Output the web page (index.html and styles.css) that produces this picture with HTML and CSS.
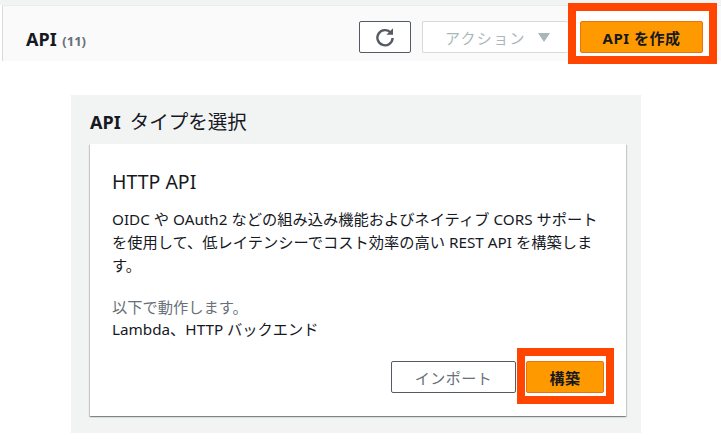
FILE: index.html
```html
<!DOCTYPE html>
<html lang="ja">
<head>
  <meta charset="UTF-8" />
  <title>API</title>
  <link rel="stylesheet" href="styles.css">
</head>
<body>
  <div class="top-strip"></div>
  <header class="list-header">
    <h1>API <span class="count">(11)</span></h1>
    <div class="header-actions">
      <button class="btn refresh" aria-label="refresh">
        <svg width="20" height="20" viewBox="0 0 20 20" fill="none" stroke="#545b64" stroke-width="2.4">
          <path d="M15.8 5.8A7.6 7.6 0 1 0 17.6 11"/>
          <path d="M18 1.2v6.6h-6.6z" fill="#545b64" stroke="none"/>
        </svg>
      </button>
      <button class="btn disabled">アクション<span class="caret"></span></button>
      <div class="callout callout-top">
        <button class="btn primary create">API を作成</button>
      </div>
    </div>
  </header>

  <section class="type-panel">
    <h2><b>API</b> タイプを選択</h2>
    <div class="card">
      <h3>HTTP API</h3>
      <p class="desc">OIDC や OAuth2 などの組み込み機能およびネイティブ CORS サポートを使用して、低レイテンシーでコスト効率の高い REST API を構築します。</p>
      <p class="works-label">以下で動作します。</p>
      <p class="works-value">Lambda、HTTP バックエンド</p>
      <div class="card-actions">
        <button class="btn import">インポート</button>
        <div class="callout callout-build">
          <button class="btn primary build">構築</button>
        </div>
      </div>
    </div>
  </section>
</body>
</html>
```

FILE: styles.css
```css
* {
  box-sizing: border-box;
}
body {
  margin: 0;
  height: 439px;
  overflow: hidden;
  background: #fff;
  color: #16191f;
  font-family: "Noto Sans", "Noto Sans CJK JP", sans-serif;
  font-size: 15.25px;
}
.top-strip {
  height: 5px;
  background: #f2f3f3;
}
.list-header {
  display: flex;
  justify-content: space-between;
  height: 56px;
  margin-left: 2px;
  padding-left: 23px;
  background: #fafafa;
  border-left: 1px solid #d5dbdb;
  border-top: 1px solid #eaeded;
}
h1 {
  margin: 21px 0 0;
  font-size: 18px;
  line-height: 24px;
  font-weight: 700;
}
.count {
  font-size: 13px;
  margin-left: 1px;
  color: #687078;
}
.header-actions {
  display: flex;
  align-items: flex-start;
  padding-right: 4px;
}
.btn {
  height: 32px;
  border-radius: 2px;
  font-family: inherit;
  font-size: 15px;
  font-weight: 700;
  letter-spacing: 0.5px;
  background: #fff;
  border: 1px solid #545b64;
  color: #545b64;
  padding: 0;
}
.refresh {
  display: flex;
  align-items: center;
  justify-content: center;
  width: 52px;
  margin-top: 15px;
  margin-right: 11px;
}
.disabled {
  display: flex;
  align-items: center;
  gap: 12px;
  width: 146px;
  margin-top: 15px;
  border-color: #d5dbdb;
  border-right: 0;
  color: #aab7b8;
  padding-left: 22px;
  letter-spacing: 1.3px;
  font-weight: 400;
}
.caret {
  width: 0;
  height: 0;
  border-left: 6px solid transparent;
  border-right: 6px solid transparent;
  border-top: 9px solid #aab7b8;
}
.primary {
  background: #ff9900;
  border-color: #ec7211;
  color: #16191f;
}
.callout {
  border: 8px solid #ff4500;
  background: #fff;
}
.callout-top {
  margin-top: -3px;
  padding: 10px 6px 3px 4px;
}
.create {
  display: block;
  width: 123px;
}
.type-panel {
  width: 570px;
  height: 338px;
  margin: 34px 0 0 71px;
  padding: 0 15px 17px 19px;
  background: #f2f3f3;
}
h2 {
  margin: 0;
  padding-top: 13px;
  height: 49px;
  font-size: 19.5px;
  line-height: 28px;
  font-weight: 400;
}
h2 b {
  font-size: 18px;
  font-weight: 700;
  margin-right: 4px;
}
.card {
  display: flex;
  flex-direction: column;
  height: 272px;
  padding: 24px 24px 12px 22px;
  background: #fff;
  box-shadow: 0 1px 1px 0 rgba(0, 28, 36, 0.3), 1px 1px 1px 0 rgba(0, 28, 36, 0.15), -1px 1px 1px 0 rgba(0, 28, 36, 0.15);
}
h3 {
  margin: 0;
  font-size: 19.5px;
  line-height: 28px;
  font-weight: 400;
}
.desc {
  margin: 12px 0 0;
  line-height: 23px;
}
.works-label {
  margin: 19px 0 0;
  line-height: 22px;
  color: #687078;
}
.works-value {
  margin: 0;
  line-height: 22px;
}
.card-actions {
  display: flex;
  justify-content: flex-end;
  align-items: flex-end;
  margin-top: auto;
  margin-right: -12px;
}
.import {
  width: 125px;
  font-weight: 400;
  color: #687078;
  margin-bottom: 11px;
  margin-right: 1px;
}
.callout-build {
  padding: 5px 2px 3px 1px;
}
.build {
  display: block;
  width: 78px;
}
```
